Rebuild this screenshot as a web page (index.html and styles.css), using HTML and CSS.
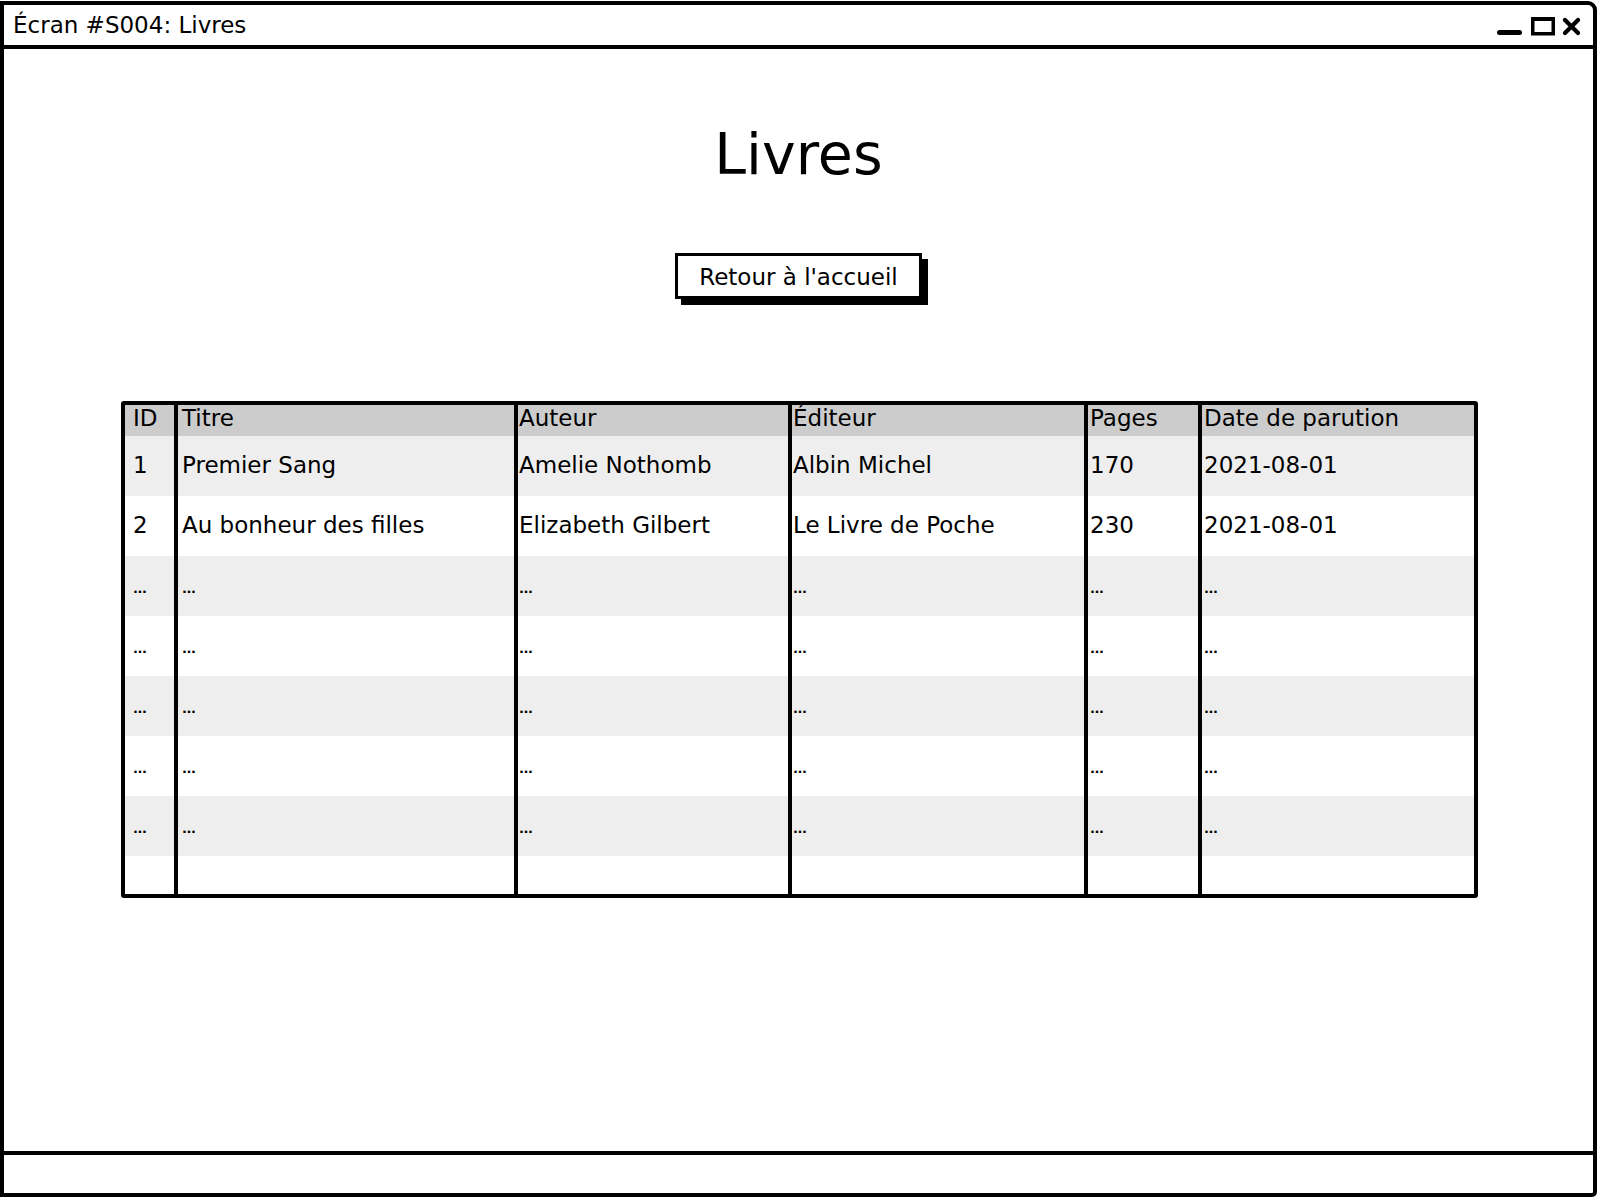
FILE: index.html
```html
<!DOCTYPE html>
<html lang="fr">
<head>
<meta charset="utf-8">
<title>Écran #S004: Livres</title>
<link rel="stylesheet" href="styles.css">
</head>
<body>
<div class="window">
  <div class="titlebar">
    <span class="title">Écran #S004: Livres</span>
    <svg class="controls" width="84" height="40" viewBox="0 0 84 40">
      <rect x="0" y="25" width="25" height="5" rx="2.5" fill="#000"/>
      <rect x="35.75" y="13.75" width="20.5" height="15" fill="none" stroke="#000" stroke-width="3.5"/>
      <line x1="35" y1="14" x2="57" y2="14" stroke="#000" stroke-width="4"/>
      <line x1="68" y1="15" x2="81" y2="28" stroke="#000" stroke-width="4.2" stroke-linecap="round"/>
      <line x1="81" y1="15" x2="68" y2="28" stroke="#000" stroke-width="4.2" stroke-linecap="round"/>
    </svg>
  </div>
  <div class="main">
    <h1 class="heading">Livres</h1>
    <div class="button">Retour à l'accueil</div>
    <div class="grid">
      <div class="row head">
        <div class="c c1">ID</div><div class="c c2">Titre</div><div class="c c3">Auteur</div><div class="c c4">Éditeur</div><div class="c c5">Pages</div><div class="c c6">Date de parution</div>
      </div>
      <div class="row odd">
        <div class="c c1">1</div><div class="c c2">Premier Sang</div><div class="c c3">Amelie Nothomb</div><div class="c c4">Albin Michel</div><div class="c c5">170</div><div class="c c6">2021-08-01</div>
      </div>
      <div class="row">
        <div class="c c1">2</div><div class="c c2">Au bonheur des filles</div><div class="c c3">Elizabeth Gilbert</div><div class="c c4">Le Livre de Poche</div><div class="c c5">230</div><div class="c c6">2021-08-01</div>
      </div>
      <div class="row odd">
        <div class="c c1"><span class="dots">...</span></div><div class="c c2"><span class="dots">...</span></div><div class="c c3"><span class="dots">...</span></div><div class="c c4"><span class="dots">...</span></div><div class="c c5"><span class="dots">...</span></div><div class="c c6"><span class="dots">...</span></div>
      </div>
      <div class="row">
        <div class="c c1"><span class="dots">...</span></div><div class="c c2"><span class="dots">...</span></div><div class="c c3"><span class="dots">...</span></div><div class="c c4"><span class="dots">...</span></div><div class="c c5"><span class="dots">...</span></div><div class="c c6"><span class="dots">...</span></div>
      </div>
      <div class="row odd">
        <div class="c c1"><span class="dots">...</span></div><div class="c c2"><span class="dots">...</span></div><div class="c c3"><span class="dots">...</span></div><div class="c c4"><span class="dots">...</span></div><div class="c c5"><span class="dots">...</span></div><div class="c c6"><span class="dots">...</span></div>
      </div>
      <div class="row">
        <div class="c c1"><span class="dots">...</span></div><div class="c c2"><span class="dots">...</span></div><div class="c c3"><span class="dots">...</span></div><div class="c c4"><span class="dots">...</span></div><div class="c c5"><span class="dots">...</span></div><div class="c c6"><span class="dots">...</span></div>
      </div>
      <div class="row odd">
        <div class="c c1"><span class="dots">...</span></div><div class="c c2"><span class="dots">...</span></div><div class="c c3"><span class="dots">...</span></div><div class="c c4"><span class="dots">...</span></div><div class="c c5"><span class="dots">...</span></div><div class="c c6"><span class="dots">...</span></div>
      </div>
      <div class="row empty">
        <div class="c c1"></div><div class="c c2"></div><div class="c c3"></div><div class="c c4"></div><div class="c c5"></div><div class="c c6"></div>
      </div>
    </div>
  </div>
  <div class="statusbar"></div>
</div>
</body>
</html>
```

FILE: styles.css
```css
html, body {
  margin: 0;
  padding: 0;
  background: #fff;
}
body {
  font-family: "DejaVu Sans", "Liberation Sans", sans-serif;
  color: #000;
}
.window {
  box-sizing: border-box;
  margin-top: 1px;
  width: 1597px;
  height: 1196px;
  border: 4px solid #000;
  border-top-right-radius: 9px;
  border-bottom-right-radius: 5px;
  display: flex;
  flex-direction: column;
  overflow: hidden;
}
.titlebar {
  flex: 0 0 40px;
  border-bottom: 4px solid #000;
  display: flex;
  align-items: center;
  justify-content: space-between;
  padding: 0 12px 0 9px;
}
.title {
  font-size: 23px;
  line-height: 40px;
  white-space: nowrap;
}
.controls {
  display: block;
}
.main {
  flex: 1 1 auto;
  display: flex;
  flex-direction: column;
  align-items: center;
  padding-top: 77px;
}
.heading {
  margin: 0;
  font-size: 57px;
  line-height: 57px;
  font-weight: normal;
}
.button {
  box-sizing: border-box;
  margin-top: 70px;
  width: 247px;
  height: 46px;
  border: 3px solid #000;
  box-shadow: 6px 6px 0 #000;
  background: #fff;
  font-size: 23px;
  line-height: 38px;
  padding-top: 2px;
  text-align: center;
  white-space: nowrap;
}
.grid {
  margin-top: 102px;
  align-self: flex-start;
  margin-left: 117px;
  width: 1357px;
  box-sizing: border-box;
  border: 4px solid #000;
  border-radius: 3px;
}
.row {
  display: grid;
  grid-template-columns: 49px 340px 274px 296px 114px 276px;
  height: 60px;
  background: #fff;
}
.row.odd {
  background: #eeeeee;
}
.row.head {
  height: 31px;
  background: #cccccc;
}
.row.empty {
  height: 38px;
}
.c {
  box-sizing: border-box;
  font-size: 23px;
  line-height: 27px;
  padding-top: 16px;
  white-space: nowrap;
  overflow: hidden;
}
.head .c {
  padding-top: 0;
}
.c2, .c3, .c4, .c5, .c6 {
  border-left: 4px solid #000;
}
.c1 { padding-left: 8px; }
.c2 { padding-left: 4px; }
.c3 { padding-left: 1px; }
.c4 { padding-left: 1px; }
.c5 { padding-left: 2px; }
.c6 { padding-left: 2px; }
.dots {
  font-size: 13px;
  font-weight: bold;
  letter-spacing: -0.5px;
}
.statusbar {
  flex: 0 0 38px;
  border-top: 4px solid #000;
}
```
